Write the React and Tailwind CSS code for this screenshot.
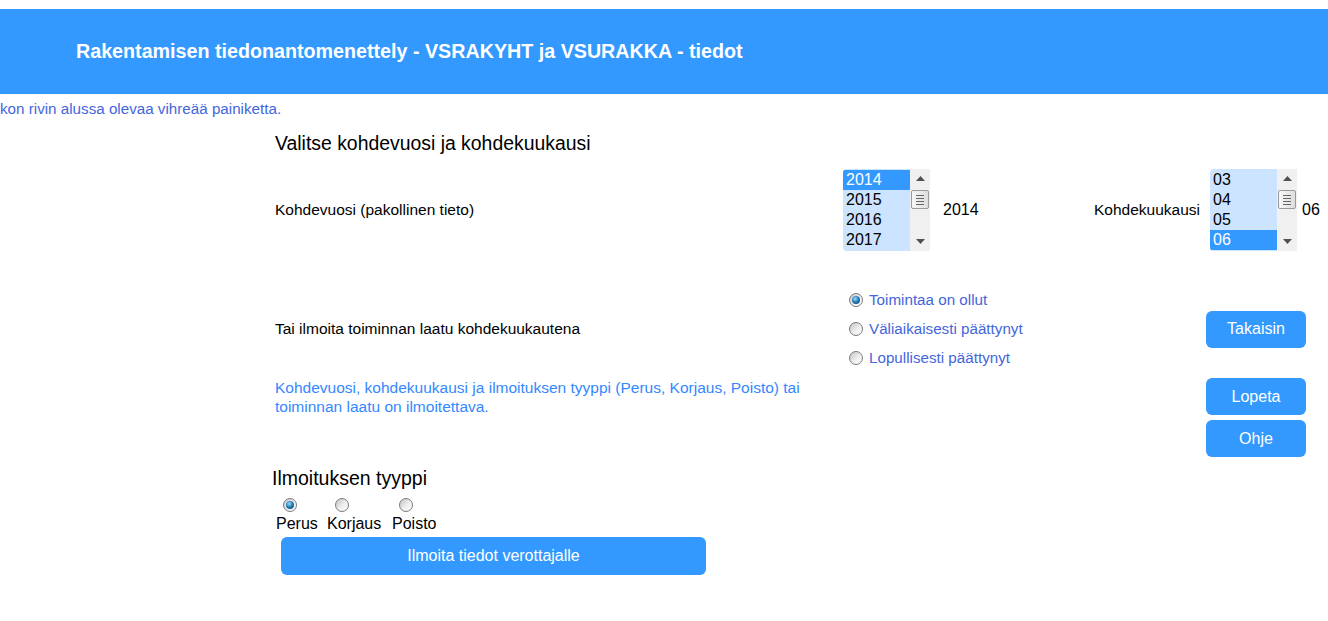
import React from 'react';

const YEARS = ['2014', '2015', '2016', '2017'];
const MONTHS = ['03', '04', '05', '06'];

function Radio({ checked }) {
  return (
    <span className="relative inline-flex h-[14px] w-[14px] shrink-0 items-center justify-center rounded-full border border-[#7a7a7a] bg-[linear-gradient(135deg,#c4c4c4,#eeeeee_55%,#ffffff)]">
      {checked && (
        <span className="h-[8px] w-[8px] rounded-full bg-[radial-gradient(circle_at_40%_35%,#9adcff,#1f78b0_50%,#0a3557)]" />
      )}
    </span>
  );
}

function ListBox({ items, selected }) {
  return (
    <div className="flex h-[82px] w-[87px] shrink-0 overflow-hidden rounded-l-[4px]">
      <div className="flex-1 bg-[#cce4ff] pt-px">
        {items.map((it) => (
          <div
            key={it}
            className={
              it === selected
                ? 'h-[20px] bg-[#3399ff] pl-[3px] text-[16px] leading-[20px] text-white'
                : 'h-[20px] pl-[3px] text-[16px] leading-[20px] text-black'
            }
          >
            {it}
          </div>
        ))}
      </div>
      <div className="flex w-[20px] flex-col items-center bg-[#f0f0f0]">
        <svg width="9" height="5" viewBox="0 0 9 5" className="mt-[7px]">
          <path d="M0 5 L4.5 0 L9 5 Z" fill="#505050" />
        </svg>
        <div className="mt-[9px] flex h-[19px] w-[18px] flex-col items-center justify-center gap-[2px] rounded-[2px] border border-[#9a9a9a] bg-[linear-gradient(90deg,#f6f6f6,#dedede)]">
          <span className="h-px w-[8px] bg-[#666]" />
          <span className="h-px w-[8px] bg-[#666]" />
          <span className="h-px w-[8px] bg-[#666]" />
          <span className="h-px w-[8px] bg-[#666]" />
        </div>
        <svg width="9" height="5" viewBox="0 0 9 5" className="mt-auto mb-[7px]">
          <path d="M0 0 L4.5 5 L9 0 Z" fill="#505050" />
        </svg>
      </div>
    </div>
  );
}

function BlueButton({ children, className = '' }) {
  return (
    <button className={'rounded-[6px] bg-[#3399ff] text-[16px] text-white ' + className}>
      {children}
    </button>
  );
}

export default function App() {
  return (
    <div className="min-h-[621px] w-[1328px] overflow-hidden bg-white pt-[9px] font-['Liberation_Sans',Arial,sans-serif] text-black">
      {/* Header bar */}
      <header className="flex h-[85px] items-center bg-[#3399ff] pl-[76px]">
        <h1 className="text-[19.7px] font-bold text-white">
          Rakentamisen tiedonantomenettely - VSRAKYHT ja VSURAKKA - tiedot
        </h1>
      </header>

      <p className="mt-[6px] whitespace-nowrap text-[15.2px] leading-[18px] text-[#4466dd]">
        kon rivin alussa olevaa vihreää painiketta.
      </p>

      <div className="pl-[275px]">
        <h2 className="mt-[14px] text-[19.4px] leading-[22px]">Valitse kohdevuosi ja kohdekuukausi</h2>

        {/* Year / month */}
        <div className="mt-[15px] flex h-[82px] items-center text-[15.5px]">
          <div className="w-[568px]">Kohdevuosi (pakollinen tieto)</div>
          <ListBox items={YEARS} selected="2014" />
          <div className="w-[164px] pl-[13px] text-[16px]">2014</div>
          <div className="w-[116px]">Kohdekuukausi</div>
          <ListBox items={MONTHS} selected="06" />
          <div className="pl-[5px] text-[16px]">06</div>
        </div>

        {/* Activity status */}
        <div className="mt-[36px] grid h-[84px] grid-cols-[574px_357px_100px] items-center text-[15.5px]">
          <div>Tai ilmoita toiminnan laatu kohdekuukautena</div>
          <div className="flex flex-col gap-[11px] text-[15.2px] text-[#4466dd]">
            <label className="flex items-center gap-[6px] leading-[18px]">
              <Radio checked /> Toimintaa on ollut
            </label>
            <label className="flex items-center gap-[6px] leading-[18px]">
              <Radio /> Väliaikaisesti päättynyt
            </label>
            <label className="flex items-center gap-[6px] leading-[18px]">
              <Radio /> Lopullisesti päättynyt
            </label>
          </div>
          <BlueButton className="h-[37px] w-[100px]">Takaisin</BlueButton>
        </div>

        {/* Help text + buttons */}
        <div className="mt-[7px] grid grid-cols-[574px_357px_100px] items-start">
          <p className="w-[560px] text-[15.5px] leading-[19px] text-[#3388ff]">
            Kohdevuosi, kohdekuukausi ja ilmoituksen tyyppi (Perus, Korjaus, Poisto) tai toiminnan laatu on ilmoitettava.
          </p>
          <div />
          <div className="flex flex-col gap-[5px]">
            <BlueButton className="h-[37px] w-[100px]">Lopeta</BlueButton>
            <BlueButton className="h-[37px] w-[100px]">Ohje</BlueButton>
          </div>
        </div>

        {/* Notice type */}
        <h3 className="-ml-[3px] mt-[10px] text-[19.5px] leading-[22px]">Ilmoituksen tyyppi</h3>
        <div className="ml-px mt-[9px] flex text-[16px] leading-[18px]">
          <label className="flex w-[51px] flex-col items-start gap-[3px]">
            <span className="ml-[7px] flex"><Radio checked /></span>
            <span>Perus</span>
          </label>
          <label className="flex w-[65px] flex-col items-start gap-[3px]">
            <span className="ml-[8px] flex"><Radio /></span>
            <span>Korjaus</span>
          </label>
          <label className="flex flex-col items-start gap-[3px]">
            <span className="ml-[7px] flex"><Radio /></span>
            <span>Poisto</span>
          </label>
        </div>
        <BlueButton className="ml-[6px] mt-[4px] h-[38px] w-[425px]">Ilmoita tiedot verottajalle</BlueButton>
      </div>
    </div>
  );
}
